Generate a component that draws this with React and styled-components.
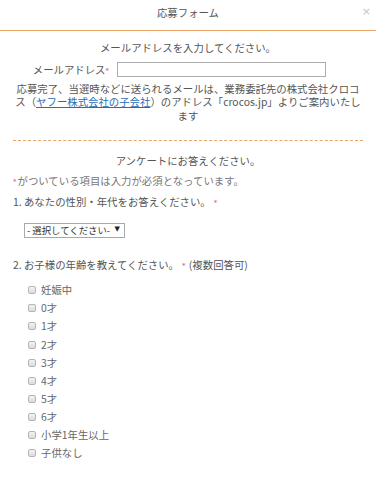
import React from "react";
import styled, { createGlobalStyle } from "styled-components";

const Global = createGlobalStyle`
  html, body { margin: 0; padding: 0; background: #fff; }
  body {
    font-family: "Noto Sans CJK JP", "Noto Sans", sans-serif;
    font-size: 10.4px;
    color: #555;
  }
  * { box-sizing: border-box; }
`;

const Page = styled.div`
  width: 376px;
  min-height: 480px;
  background: #fff;
`;

const Header = styled.header`
  position: relative;
  height: 31px;
  border-bottom: 1px solid #eca567;
  padding-top: 6px;
  text-align: center;
  line-height: 14px;
  color: #555;
`;

const Close = styled.span`
  position: absolute;
  right: 5px;
  top: 5px;
  font-family: "DejaVu Sans", sans-serif;
  font-size: 11px;
  line-height: 14px;
  color: #c6c6c6;
`;

const Body = styled.main`
  padding: 0 13px;
`;

const EmailSection = styled.section`
  text-align: center;
  padding-top: 10px;
  padding-bottom: 18px;
  border-bottom: 1px dashed #e9a466;
`;

const Lead = styled.p`
  margin: 0;
  line-height: 14px;
  text-align: center;
`;

const FieldRow = styled.div`
  display: flex;
  align-items: center;
  gap: 7px;
  margin-top: 7px;
  height: 15px;
`;

const FieldLabel = styled.label`
  width: 97px;
  text-align: right;
  line-height: 15px;
`;

const Req = styled.span`
  display: inline-block;
  color: #d2524f;
  font-family: "DejaVu Sans", sans-serif;
  font-size: 7px;
  line-height: 7px;
  vertical-align: 1px;
  margin-left: ${(p) => p.$gap || 0}px;
  margin-right: 1px;
`;

const TextInput = styled.input`
  width: 209px;
  height: 15px;
  border: 1px solid #acacac;
  padding: 0 3px;
  font: inherit;
  background: #fff;
`;

const Notice = styled.p`
  margin: 5px 0 0;
  line-height: 13.4px;
  text-align: center;
`;

const Link = styled.a`
  color: #2a6db5;
  text-decoration: underline;
`;

const SurveySection = styled.section`
  padding-top: 13px;
`;

const Note = styled.p`
  margin: 6px 0 0;
  line-height: 14px;
  color: #777;
`;

const Question = styled.p`
  margin: ${(p) => p.$top}px 0 0;
  line-height: 14px;
`;

const SelectWrap = styled.div`
  position: relative;
  width: 101px;
  height: 15px;
  margin: 13px 0 0 11px;
`;

const Select = styled.select`
  appearance: none;
  -webkit-appearance: none;
  width: 100%;
  height: 15px;
  border: 1px solid #a9a9a9;
  border-radius: 0;
  background: #fff;
  color: #333;
  font-family: inherit;
  font-size: 9.4px;
  line-height: 13px;
  padding: 0 12px 0 2px;
  margin: 0;
`;

const Arrow = styled.span`
  position: absolute;
  right: 5px;
  top: 0;
  font-family: "DejaVu Sans", sans-serif;
  font-size: 7px;
  line-height: 15px;
  color: #222;
  pointer-events: none;
`;

const CheckList = styled.ul`
  list-style: none;
  margin: 9px 0 0 15px;
  padding: 0;
`;

const CheckItem = styled.li`
  display: flex;
  align-items: center;
  gap: 5px;
  height: 18.1px;
  line-height: 18px;
  color: #666;
`;

const Box = styled.input`
  appearance: none;
  -webkit-appearance: none;
  margin: 0;
  width: 8px;
  height: 8px;
  border: 1px solid #b5b5b5;
  border-radius: 2px;
  background: linear-gradient(#f2f2f2, #dcdcdc);
`;

const ages = ["妊娠中", "0才", "1才", "2才", "3才", "4才", "5才", "6才", "小学1年生以上", "子供なし"];

export default function App() {
  return (
    <Page>
      <Global />
      <Header>
        応募フォーム
        <Close>×</Close>
      </Header>
      <Body>
        <EmailSection>
          <Lead>メールアドレスを入力してください。</Lead>
          <FieldRow>
            <FieldLabel>
              メールアドレス<Req>*</Req>
            </FieldLabel>
            <TextInput type="text" />
          </FieldRow>
          <Notice>
            応募完了、当選時などに送られるメールは、業務委託先の株式会社クロコス（<Link href="#">ヤフー株式会社の子会社</Link>）のアドレス「crocos.jp」よりご案内いたします
          </Notice>
        </EmailSection>
        <SurveySection>
          <Lead>アンケートにお答えください。</Lead>
          <Note>
            <Req>*</Req>がついている項目は入力が必須となっています。
          </Note>
          <Question $top={7}>
            1. あなたの性別・年代をお答えください。<Req $gap={3}>*</Req>
          </Question>
          <SelectWrap>
            <Select defaultValue="">
              <option value="">- 選択してください-</option>
            </Select>
            <Arrow>▼</Arrow>
          </SelectWrap>
          <Question $top={21}>
            2. お子様の年齢を教えてください。<Req $gap={3}>*</Req> (複数回答可)
          </Question>
          <CheckList>
            {ages.map((a) => (
              <CheckItem key={a}>
                <Box type="checkbox" />
                {a}
              </CheckItem>
            ))}
          </CheckList>
        </SurveySection>
      </Body>
    </Page>
  );
}
